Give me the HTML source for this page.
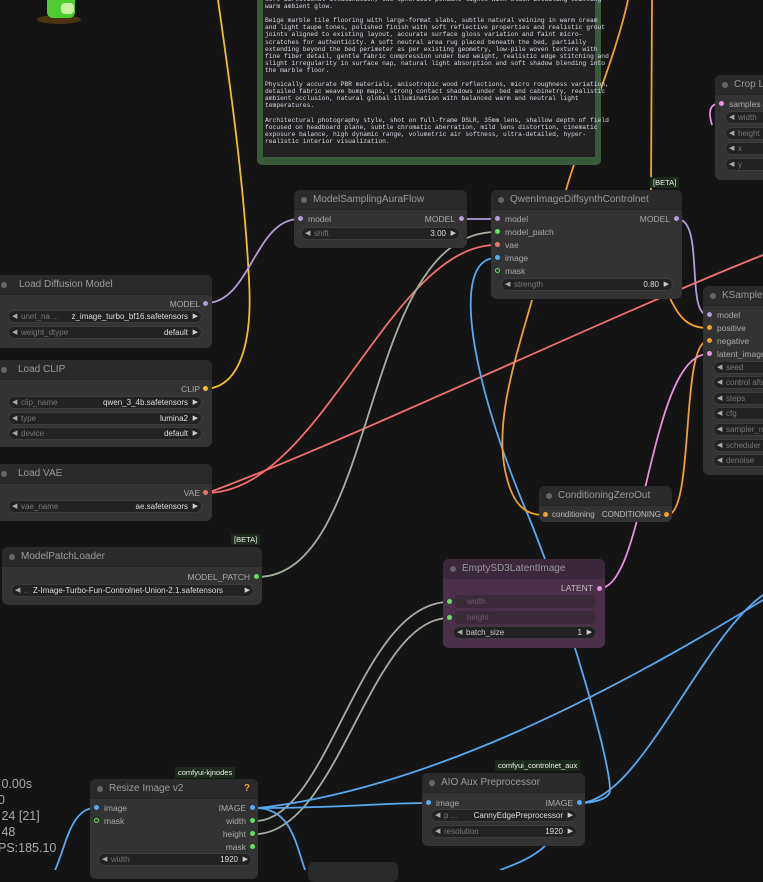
<!DOCTYPE html>
<html><head><meta charset="utf-8">
<style>
*{margin:0;padding:0;box-sizing:border-box}
body{width:763px;height:870px;overflow:hidden;background:#141414;font-family:"Liberation Sans",sans-serif;position:relative}
.n{position:absolute;background:#333;border-radius:6px;overflow:hidden}
.t{position:absolute;left:0;right:0;top:0;height:20px;background:#2a2a2a;border-bottom:1px solid #262626;color:#9a9a9a;font-size:10px;line-height:20px;padding-left:19px;white-space:nowrap}
.t:before{content:"";position:absolute;left:7px;top:7px;width:6px;height:6px;border-radius:50%;background:#666}
.s{position:absolute;font-size:8.5px;color:#aaa;white-space:nowrap;line-height:10px}
.r{text-align:right}
.d{position:absolute;width:5px;height:5px;border-radius:50%}
.w{position:absolute;height:13px;background:#222;border:1px solid #3c3c3c;border-radius:7px;font-size:8px;color:#777;line-height:11px;padding-left:12px;white-space:nowrap}
.w:before{content:"◀";position:absolute;left:3px;top:0;font-size:7px;color:#aaa}
.w .v{position:absolute;right:13px;top:0;color:#ddd}
.w:after{content:"▶";position:absolute;right:3px;top:0;font-size:7px;color:#ccc}
.w.x:before,.w.x:after{content:none}
.b{position:absolute;background:#1c2a1c;color:#eee;font-size:7.5px;line-height:11px;padding:0 3px;white-space:nowrap}
</style></head><body>

<svg width="763" height="870" style="position:absolute;left:0;top:0" fill="none" stroke-width="1.8">
<path d="M206,389 C245,386 252,330 249,280 C244,180 228,70 218,0" stroke="#f0c020"/>
<path d="M206,303 C250,303 255,219 299,219" stroke="#b49ad8"/>
<path d="M462,219 C478,219 480,219 496,219" stroke="#b49ad8"/>
<path d="M677,219 C705,219 685,315 708,315" stroke="#b49ad8"/>
<path d="M206,493 C320,493 390,245 496,245" stroke="#f07070"/>
<path d="M210,492 C350,440 600,320 763,255" stroke="#f07070"/>
<path d="M257,577 C380,577 360,232 496,232" stroke="#a3b0a0"/>
<path d="M258,821 C330,815 360,602 449,602" stroke="#a3b0a0"/>
<path d="M258,834 C340,828 370,618 449,618" stroke="#a3b0a0"/>
<path d="M496,258 C450,258 470,380 530,520 C570,620 610,760 610,790 C610,800 590,803 580,803" stroke="#5aa8ee"/>
<path d="M580,803 C640,800 700,640 763,595" stroke="#5aa8ee"/>
<path d="M258,808 C340,808 380,803 427,803" stroke="#5aa8ee"/>
<path d="M258,808 C420,790 600,700 763,600" stroke="#5aa8ee"/>
<path d="M258,808 C290,810 295,840 305,870" stroke="#5aa8ee"/>
<path d="M95,808 C70,808 65,850 55,870" stroke="#5aa8ee"/>
<path d="M545,846 C530,860 510,866 500,870" stroke="#5aa8ee"/>
<path d="M652,0 L651,190" stroke="#f0a030"/>
<path d="M628,0 C615,60 580,140 566,190" stroke="#f0a030"/>
<path d="M532,300 C515,360 495,420 505,470 C512,505 525,515 544,515" stroke="#f0a030"/>
<path d="M670,298 C680,320 690,328 708,328" stroke="#f0a030"/>
<path d="M667,515 C695,515 680,341 708,341" stroke="#f0a030"/>
<path d="M600,588 C645,588 650,354 708,354" stroke="#e890e0"/>
<path d="M718,104 C710,104 708,112 712,125" stroke="#e890e0"/>
</svg>

<!-- frog -->
<div style="position:absolute;left:37px;top:15px;width:44px;height:9px;border-radius:50%;background:#4a3410"></div>
<div style="position:absolute;left:47px;top:0;width:28px;height:18px;background:#4ccc30;border-radius:0 0 6px 6px"></div>
<div style="position:absolute;left:61px;top:3px;width:13px;height:11px;background:#c8f0a0;border-radius:4px"></div>

<!-- note -->
<div style="position:absolute;left:257px;top:-10px;width:344px;height:175px;background:#3b5a3b;border-radius:5px"></div>
<div style="position:absolute;left:263px;top:-6px;width:332px;height:163px;background:#222;font-family:'Liberation Mono',monospace;font-size:6.3px;line-height:7.1px;color:#dadae8;padding:2px 2px;white-space:pre">soft directional illumination, two spherical pendant lights with black detailing emitting
warm ambient glow.

Beige marble tile flooring with large-format slabs, subtle natural veining in warm cream
and light taupe tones, polished finish with soft reflective properties and realistic grout
joints aligned to existing layout, accurate surface gloss variation and faint micro-
scratches for authenticity. A soft neutral area rug placed beneath the bed, partially
extending beyond the bed perimeter as per existing geometry, low-pile woven texture with
fine fiber detail, gentle fabric compression under bed weight, realistic edge stitching and
slight irregularity in surface nap, natural light absorption and soft shadow blending into
the marble floor.

Physically accurate PBR materials, anisotropic wood reflections, micro roughness variation,
detailed fabric weave bump maps, strong contact shadows under bed and cabinetry, realistic
ambient occlusion, natural global illumination with balanced warm and neutral light
temperatures.

Architectural photography style, shot on full-frame DSLR, 35mm lens, shallow depth of field
focused on headboard plane, subtle chromatic aberration, mild lens distortion, cinematic
exposure balance, high dynamic range, volumetric air softness, ultra-detailed, hyper-
realistic interior visualization.</div>

<!-- Load Diffusion Model -->
<div class="n" style="left:-6px;top:275px;width:218px;height:73px">
<div class="t" style="padding-left:25px">Load Diffusion Model</div>
<div class="s r" style="right:12px;top:24px">MODEL</div><div class="d" style="right:4px;top:26px;background:#b49ad8"></div>
<div class="w" style="left:14px;top:35px;width:194px">unet_na ... <span class="v" style="color:#ddd">z_image_turbo_bf16.safetensors</span></div>
<div class="w" style="left:14px;top:51px;width:194px">weight_dtype<span class="v">default</span></div>
</div>
<!-- Load CLIP -->
<div class="n" style="left:-6px;top:360px;width:218px;height:87px">
<div class="t" style="padding-left:24px">Load CLIP</div>
<div class="s r" style="right:12px;top:24px">CLIP</div><div class="d" style="right:4px;top:26px;background:#f0c020"></div>
<div class="w" style="left:14px;top:36px;width:194px">clip_name<span class="v">qwen_3_4b.safetensors</span></div>
<div class="w" style="left:14px;top:52px;width:194px">type<span class="v">lumina2</span></div>
<div class="w" style="left:14px;top:67px;width:194px">device<span class="v">default</span></div>
</div>
<!-- Load VAE -->
<div class="n" style="left:-6px;top:464px;width:218px;height:57px">
<div class="t" style="padding-left:24px">Load VAE</div>
<div class="s r" style="right:12px;top:24px">VAE</div><div class="d" style="right:4px;top:26px;background:#f07070"></div>
<div class="w" style="left:14px;top:36px;width:194px">vae_name<span class="v">ae.safetensors</span></div>
</div>
<!-- ModelPatchLoader -->
<div class="b" style="left:231px;top:534px">[BETA]</div>
<div class="n" style="left:2px;top:547px;width:260px;height:58px">
<div class="t">ModelPatchLoader</div>
<div class="s r" style="right:12px;top:25px">MODEL_PATCH</div><div class="d" style="right:3px;top:27px;background:#60e060"></div>
<div class="w" style="left:9px;top:37px;width:243px">.. <span class="v" style="right:30px">Z-Image-Turbo-Fun-Controlnet-Union-2.1.safetensors</span></div>
</div>
<!-- ModelSamplingAuraFlow -->
<div class="n" style="left:294px;top:190px;width:173px;height:58px">
<div class="t">ModelSamplingAuraFlow</div>
<div class="s" style="left:14px;top:24px">model</div><div class="d" style="left:4px;top:26px;background:#b49ad8"></div>
<div class="s r" style="right:12px;top:24px">MODEL</div><div class="d" style="right:3px;top:26px;background:#b49ad8"></div>
<div class="w" style="left:7px;top:37px;width:159px">shift<span class="v">3.00</span></div>
</div>
<!-- Qwen -->
<div class="b" style="left:650px;top:177px">[BETA]</div>
<div class="n" style="left:491px;top:190px;width:191px;height:109px">
<div class="t">QwenImageDiffsynthControlnet</div>
<div class="s" style="left:14px;top:24px">model</div><div class="d" style="left:4px;top:26px;background:#b49ad8"></div>
<div class="s" style="left:14px;top:37px">model_patch</div><div class="d" style="left:4px;top:39px;background:#60e060"></div>
<div class="s" style="left:14px;top:50px">vae</div><div class="d" style="left:4px;top:52px;background:#f07070"></div>
<div class="s" style="left:14px;top:63px">image</div><div class="d" style="left:4px;top:65px;background:#5aa8ee"></div>
<div class="s" style="left:14px;top:76px">mask</div><div class="d" style="left:4px;top:78px;border:1px solid #60e060"></div>
<div class="s r" style="right:12px;top:24px">MODEL</div><div class="d" style="right:3px;top:26px;background:#b49ad8"></div>
<div class="w" style="left:10px;top:88px;width:172px">strength<span class="v">0.80</span></div>
</div>
<!-- Crop -->
<div class="n" style="left:715px;top:75px;width:60px;height:105px">
<div class="t">Crop L</div>
<div class="s" style="left:14px;top:24px">samples</div><div class="d" style="left:4px;top:26px;background:#e890e0"></div>
<div class="w" style="left:10px;top:36px;width:60px">width</div>
<div class="w" style="left:10px;top:52px;width:60px">height</div>
<div class="w" style="left:10px;top:67px;width:60px">x</div>
<div class="w" style="left:10px;top:83px;width:60px">y</div>
</div>
<!-- KSampler -->
<div class="n" style="left:703px;top:286px;width:70px;height:189px">
<div class="t">KSampler</div>
<div class="s" style="left:14px;top:24px">model</div><div class="d" style="left:4px;top:26px;background:#b49ad8"></div>
<div class="s" style="left:14px;top:37px">positive</div><div class="d" style="left:4px;top:39px;background:#f0a030"></div>
<div class="s" style="left:14px;top:50px">negative</div><div class="d" style="left:4px;top:52px;background:#f0a030"></div>
<div class="s" style="left:14px;top:63px">latent_image</div><div class="d" style="left:4px;top:65px;background:#e890e0"></div>
<div class="w" style="left:10px;top:75px;width:70px">seed</div>
<div class="w" style="left:10px;top:90px;width:70px">control afte</div>
<div class="w" style="left:10px;top:106px;width:70px">steps</div>
<div class="w" style="left:10px;top:121px;width:70px">cfg</div>
<div class="w" style="left:10px;top:137px;width:70px">sampler_n</div>
<div class="w" style="left:10px;top:153px;width:70px">scheduler</div>
<div class="w" style="left:10px;top:168px;width:70px">denoise</div>
</div>
<!-- ConditioningZeroOut -->
<div class="n" style="left:539px;top:486px;width:133px;height:36px">
<div class="t">ConditioningZeroOut</div>
<div class="s" style="left:13px;top:24px;color:#bbb;font-size:8px">conditioning</div><div class="d" style="left:4px;top:26px;background:#f0a030"></div>
<div class="s r" style="right:11px;top:24px;color:#bbb;font-size:8px">CONDITIONING</div><div class="d" style="right:3px;top:26px;background:#f0a030"></div>
</div>
<!-- EmptySD3 -->
<div class="n" style="left:443px;top:559px;width:162px;height:89px;background:#4a3149">
<div class="t" style="background:#3c283b;border-color:#3a2739">EmptySD3LatentImage</div>
<div class="s r" style="right:12px;top:24px;color:#bbb">LATENT</div><div class="d" style="right:3px;top:27px;background:#e890e0"></div>
<div class="d" style="left:4px;top:40px;background:#60e060"></div>
<div class="w x" style="left:10px;top:36px;width:143px;background:#3b2a3a;border-color:#3b2a3a;color:#6a5a6a;padding-left:13px">width</div>
<div class="d" style="left:4px;top:56px;background:#60e060"></div>
<div class="w x" style="left:10px;top:52px;width:143px;background:#3b2a3a;border-color:#3b2a3a;color:#6a5a6a;padding-left:13px">height</div>
<div class="w" style="left:10px;top:67px;width:143px;color:#ccc">batch_size<span class="v">1</span></div>
</div>
<!-- Resize Image v2 -->
<div class="b" style="left:175px;top:767px">comfyui-kjnodes</div>
<div class="n" style="left:90px;top:779px;width:168px;height:100px">
<div class="t">Resize Image v2<span style="position:absolute;right:8px;color:#f0a020;font-weight:bold">?</span></div>
<div class="s" style="left:14px;top:24px">image</div><div class="d" style="left:4px;top:26px;background:#5aa8ee"></div>
<div class="s" style="left:14px;top:37px">mask</div><div class="d" style="left:4px;top:39px;border:1px solid #60e060"></div>
<div class="s r" style="right:12px;top:24px">IMAGE</div><div class="d" style="right:3px;top:26px;background:#5aa8ee"></div>
<div class="s r" style="right:12px;top:37px">width</div><div class="d" style="right:3px;top:39px;background:#60e060"></div>
<div class="s r" style="right:12px;top:50px">height</div><div class="d" style="right:3px;top:52px;background:#60e060"></div>
<div class="s r" style="right:12px;top:63px">mask</div><div class="d" style="right:3px;top:65px;background:#60e060"></div>
<div class="w" style="left:8px;top:74px;width:154px">width<span class="v">1920</span></div>
</div>
<!-- AIO -->
<div class="b" style="left:495px;top:760px">comfyui_controlnet_aux</div>
<div class="n" style="left:422px;top:773px;width:163px;height:73px">
<div class="t">AIO Aux Preprocessor</div>
<div class="s" style="left:14px;top:25px">image</div><div class="d" style="left:4px;top:27px;background:#5aa8ee"></div>
<div class="s r" style="right:12px;top:25px">IMAGE</div><div class="d" style="right:3px;top:27px;background:#5aa8ee"></div>
<div class="w" style="left:9px;top:36px;width:146px">p ... <span class="v" style="color:#ddd">CannyEdgePreprocessor</span></div>
<div class="w" style="left:9px;top:52px;width:146px">resolution<span class="v">1920</span></div>
</div>
<!-- partial -->
<div class="n" style="left:308px;top:862px;width:90px;height:20px;background:#2a2a2a"></div>
<!-- stats -->
<div style="position:absolute;left:-2px;top:776px;color:#aaa;font-size:12.5px;line-height:16px;white-space:pre"> 0.00s
0
 24 [21]
 48
PS:185.10</div>
</body></html>
